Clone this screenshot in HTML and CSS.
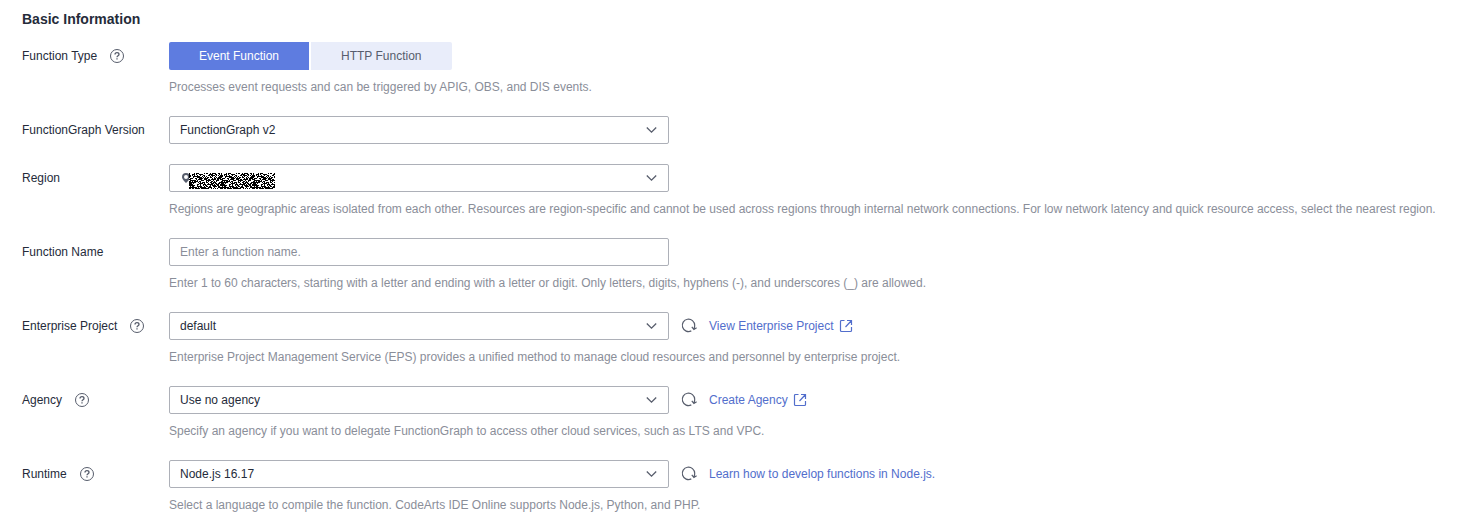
FILE: index.html
```html
<!DOCTYPE html>
<html lang="en">
<head>
<meta charset="utf-8">
<meta name="viewport" content="width=device-width, initial-scale=1">
<title>Create Function</title>
<link rel="stylesheet" href="styles.css">
</head>
<body>
<svg class="sprite" aria-hidden="true">
  <symbol id="help" viewBox="0 0 16 16"><circle cx="8" cy="8" r="6.5"/><path stroke-width="1.300" d="M6 6.600c0-1.200.8-1.900 2-1.900s2 .7 2 1.700c0 1.300-2 1.400-2 2.900M8 10.300v1.300"/></symbol>
  <symbol id="chevron" viewBox="0 0 12 12"><path stroke-width="1.300" d="M.8 3.500 5.500 8.200l4.700-4.700"/></symbol>
  <symbol id="refresh" viewBox="0 0 16 16"><path stroke-width="1.200" d="M10.300 12.900A6.200 6.200 0 1 1 13.700 7.300q0 2-.7 3.600M10.800 8.900l2.100 2.500 2.700-1.700"/></symbol>
  <symbol id="external" viewBox="0 0 14 14"><path stroke-width="1.200" d="M5.500 1.500H2.500a1 1 0 0 0-1 1v9a1 1 0 0 0 1 1h9a1 1 0 0 0 1-1V8M8 1.500h4.500V6M12.500 1.500l-6 6.500"/></symbol>
</svg>
<main class="page">
  <form class="form">
    <h2 class="title">Basic Information</h2>

    <div class="row">
      <div class="label"><span id="type-label">Function Type</span><svg class="help"><use href="#help"/></svg></div>
      <div class="field">
        <div class="tabs" role="group" aria-labelledby="type-label">
          <button class="tab tab-active" type="button" aria-pressed="true">Event Function</button>
          <button class="tab" type="button" aria-pressed="false">HTTP Function</button>
        </div>
        <p class="hint">Processes event requests and can be triggered by APIG, OBS, and DIS events.</p>
      </div>
    </div>

    <div class="row">
      <div class="label"><label for="version">FunctionGraph Version</label></div>
      <div class="field">
        <div class="select"><select class="control" id="version"><option>FunctionGraph v2</option></select><svg class="chevron"><use href="#chevron"/></svg></div>
      </div>
    </div>

    <div class="row">
      <div class="label"><label for="region">Region</label></div>
      <div class="field">
        <div class="select"><select class="control" id="region"><option></option></select>
          <span class="region"><svg class="pin" viewBox="0 0 8 10"><path fill-rule="evenodd" d="M4 0a4 4 0 0 1 4 4c0 2.500-4 6-4 6S0 6.500 0 4a4 4 0 0 1 4-4zm0 2a2 2 0 1 0 0 4 2 2 0 0 0 0-4z"/></svg><svg class="mask" id="mask" viewBox="0 0 86 16" shape-rendering="crispEdges"></svg></span>
          <svg class="chevron"><use href="#chevron"/></svg></div>
        <p class="hint">Regions are geographic areas isolated from each other. Resources are region-specific and cannot be used across regions through internal network connections. For low network latency and quick resource access, select the nearest region.</p>
      </div>
    </div>

    <div class="row">
      <div class="label"><label for="name">Function Name</label></div>
      <div class="field">
        <input class="control" id="name" type="text" placeholder="Enter a function name.">
        <p class="hint">Enter 1 to 60 characters, starting with a letter and ending with a letter or digit. Only letters, digits, hyphens (-), and underscores (_) are allowed.</p>
      </div>
    </div>

    <div class="row">
      <div class="label"><label for="project">Enterprise Project</label><svg class="help"><use href="#help"/></svg></div>
      <div class="field">
        <div class="line">
          <div class="select"><select class="control" id="project"><option>default</option></select><svg class="chevron"><use href="#chevron"/></svg></div>
          <button class="refresh" type="button" aria-label="Refresh"><svg><use href="#refresh"/></svg></button>
          <a class="link" href="#">View Enterprise Project<svg class="external"><use href="#external"/></svg></a>
        </div>
        <p class="hint">Enterprise Project Management Service (EPS) provides a unified method to manage cloud resources and personnel by enterprise project.</p>
      </div>
    </div>

    <div class="row">
      <div class="label"><label for="agency">Agency</label><svg class="help"><use href="#help"/></svg></div>
      <div class="field">
        <div class="line">
          <div class="select"><select class="control" id="agency"><option>Use no agency</option></select><svg class="chevron"><use href="#chevron"/></svg></div>
          <button class="refresh" type="button" aria-label="Refresh"><svg><use href="#refresh"/></svg></button>
          <a class="link" href="#">Create Agency<svg class="external"><use href="#external"/></svg></a>
        </div>
        <p class="hint">Specify an agency if you want to delegate FunctionGraph to access other cloud services, such as LTS and VPC.</p>
      </div>
    </div>

    <div class="row">
      <div class="label"><label for="runtime">Runtime</label><svg class="help"><use href="#help"/></svg></div>
      <div class="field">
        <div class="line">
          <div class="select"><select class="control" id="runtime"><option>Node.js 16.17</option></select><svg class="chevron"><use href="#chevron"/></svg></div>
          <button class="refresh" type="button" aria-label="Refresh"><svg><use href="#refresh"/></svg></button>
          <a class="link" href="#">Learn how to develop functions in Node.js.</a>
        </div>
        <p class="hint">Select a language to compile the function. CodeArts IDE Online supports Node.js, Python, and PHP.</p>
      </div>
    </div>
  </form>
</main>
<script src="mask.js"></script>
</body>
</html>
```
FILE: mask.js
```js
// Fills the region mask with a repeating black and white noise tile.
var tile = [];
var seed = 4711;
for (var i = 0; i < 32 * 16; i++) {
  seed = (seed * 16807) % 2147483647;
  tile.push(seed / 2147483647 < 0.56);
}
var d = "";
for (var y = 0; y < 16; y++) {
  for (var x = 0; x < 86; x++) {
    if (tile[y * 32 + (x % 32)]) d += "M" + x + " " + y + "h1v1h-1z";
  }
}
var path = document.createElementNS("http://www.w3.org/2000/svg", "path");
path.setAttribute("d", d);
document.getElementById("mask").appendChild(path);
```
FILE: styles.css
```css
* { box-sizing: border-box; }
body {
  margin: 0;
  background: #fff;
  color: #252b3a;
  font: 12px/18px "Liberation Sans", Arial, sans-serif;
}
.sprite { position: absolute; width: 0; height: 0; }
svg { fill: none; stroke: #575d6c; flex: none; }
.page { padding: 10px 22px 0; }
.form { display: flex; flex-direction: column; gap: 20px; }
.title { margin: 0 0 -6px; font-size: 14px; line-height: 18px; font-weight: 700; }
.row { display: grid; grid-template-columns: 147px minmax(0, 1fr); }
.label { display: flex; align-items: center; gap: 12px; height: 28px; }
.help { width: 16px; height: 16px; }
.tabs { display: flex; gap: 2px; }
.tab {
  height: 28px;
  padding: 0 30px;
  border: 0;
  border-radius: 0 2px 2px 0;
  background: #e9edfa;
  color: #575d6c;
  font: inherit;
}
.tab-active { border-radius: 2px 0 0 2px; background: #5e7ce0; color: #fff; }
.hint { margin: 8px 0 0; color: #8a8e99; }
.line { display: flex; align-items: center; }
.select { position: relative; width: 500px; max-width: 100%; }
.control {
  display: block;
  width: 500px;
  max-width: 100%;
  height: 28px;
  padding: 0 10px;
  border: 1px solid #adb0b8;
  border-radius: 2px;
  background: #fff;
  color: #252b3a;
  font: inherit;
  appearance: none;
}
.control::placeholder { color: #8a8e99; opacity: 1; }
.chevron { position: absolute; top: 8px; right: 11px; width: 12px; height: 12px; pointer-events: none; }
.region { position: absolute; top: 9px; left: 13px; display: flex; pointer-events: none; }
.pin { width: 8px; height: 10px; fill: #575d6c; stroke: none; }
.mask { width: 86px; height: 16px; margin-left: -1px; background: #fff; fill: #000; stroke: none; }
.refresh { display: flex; margin-left: 12px; padding: 0; border: 0; background: none; }
.refresh svg { width: 16px; height: 16px; }
.link { display: flex; align-items: center; gap: 5px; margin-left: 12px; color: #526ecc; text-decoration: none; }
.external { width: 14px; height: 14px; stroke: #526ecc; }
```
